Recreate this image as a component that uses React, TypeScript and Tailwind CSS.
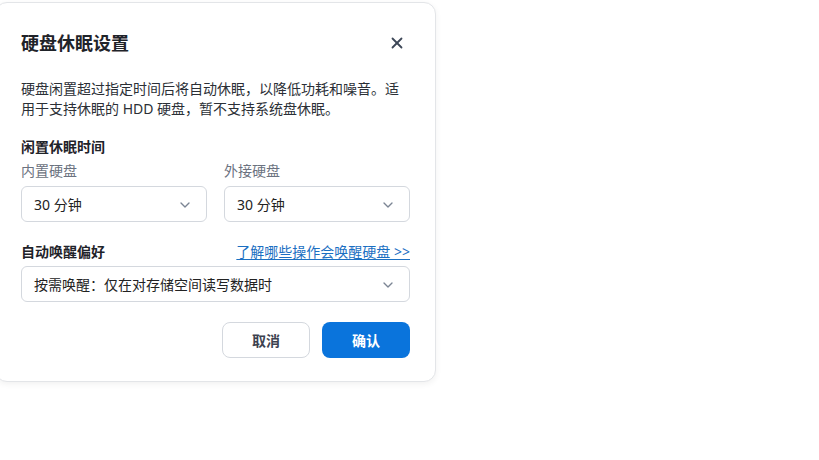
import { X, ChevronDown } from 'lucide-react';

const FONT = { fontFamily: '"Noto Sans", "Noto Sans CJK SC", sans-serif' };

function Select({ value }: { value: string }) {
  return (
    <div className="h-[36px] flex items-center justify-between border border-[#d4d8de] rounded-md pl-[12px] pr-[13px] bg-white">
      <span className="text-[14px] text-[#222]">{value}</span>
      <ChevronDown size={16} strokeWidth={2} className="text-[#7b8594] mt-[1px]" />
    </div>
  );
}

export default function App() {
  return (
    <div className="w-[819px] h-[460px] bg-white pt-[2px] overflow-hidden" style={FONT}>
      <div className="-ml-[5px] w-[441px] h-[380px] rounded-xl border border-[#e3e5e8] bg-white shadow-[0_2px_6px_rgba(0,0,0,0.06)] pl-[25px] pr-[25px]">
        {/* Header */}
        <div className="flex items-center justify-between pt-[26px] h-[54px]">
          <h1 className="text-[18px] font-bold text-[#1f2329] leading-none">硬盘休眠设置</h1>
          <X size={18} strokeWidth={2.4} className="text-[#3d4757] mr-[4px]" />
        </div>

        <p className="mt-[22px] text-[14px] leading-[20px] text-[#2b2f36]">
          硬盘闲置超过指定时间后将自动休眠，以降低功耗和噪音。适用于支持休眠的 HDD 硬盘，暂不支持系统盘休眠。
        </p>

        {/* Idle time */}
        <div className="mt-[18px] text-[14px] font-bold text-[#1f2329] leading-[20px]">闲置休眠时间</div>
        <div className="grid grid-cols-2 gap-[17px] mt-[4px]">
          <div>
            <div className="text-[14px] text-[#6b7280] leading-[20px]">内置硬盘</div>
            <div className="mt-[5px]">
              <Select value="30 分钟" />
            </div>
          </div>
          <div>
            <div className="text-[14px] text-[#6b7280] leading-[20px]">外接硬盘</div>
            <div className="mt-[5px]">
              <Select value="30 分钟" />
            </div>
          </div>
        </div>

        {/* Wake preference */}
        <div className="mt-[20px] flex items-center justify-between leading-[20px]">
          <span className="text-[14px] font-bold text-[#1f2329]">自动唤醒偏好</span>
          <a className="text-[14px] text-[#1b6fc2] underline underline-offset-2">了解哪些操作会唤醒硬盘 &gt;&gt;</a>
        </div>
        <div className="mt-[4px]">
          <Select value="按需唤醒：仅在对存储空间读写数据时" />
        </div>

        {/* Footer */}
        <div className="flex justify-end gap-[12px] mt-[20px]">
          <button className="w-[88px] h-[36px] rounded-lg border border-[#d4d8de] bg-white text-[14px] font-bold text-[#3d4250]">
            取消
          </button>
          <button className="w-[88px] h-[36px] rounded-lg bg-[#0a74dc] text-[14px] font-bold text-white">
            确认
          </button>
        </div>
      </div>
    </div>
  );
}
